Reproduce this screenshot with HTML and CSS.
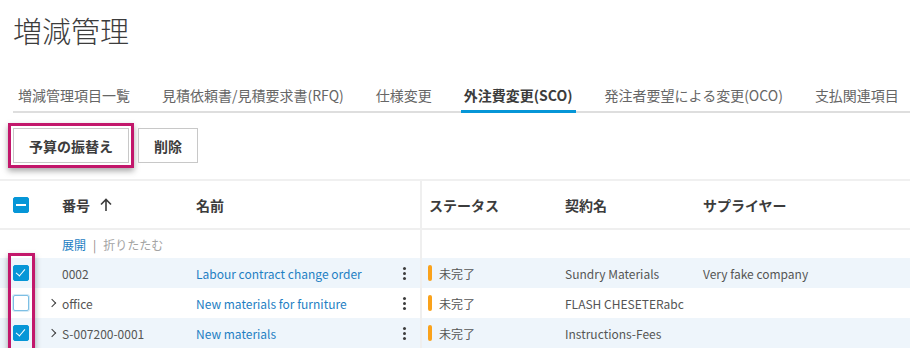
FILE: index.html
```html
<!DOCTYPE html>
<html lang="ja">
<head>
    <meta charset="UTF-8">
    <meta name="viewport" content="width=device-width, initial-scale=1.0">
    <title>増減管理</title>
    <link rel="stylesheet" href="styles.css">
</head>
<body>

    <div class="page-head">
        <h1 class="page-title">増減管理</h1>

        <nav class="tabs">
            <a class="tab">増減管理項目一覧</a>
            <a class="tab">見積依頼書/見積要求書(RFQ)</a>
            <a class="tab">仕様変更</a>
            <a class="tab active">外注費変更(SCO)</a>
            <a class="tab">発注者要望による変更(OCO)</a>
            <a class="tab">支払関連項目</a>
        </nav>

        <div class="toolbar">
            <span class="highlight">
                <button class="btn">予算の振替え</button>
            </span>
            <button class="btn">削除</button>
        </div>
    </div>

    <div class="grid-table">
        <!-- 注釈：チェックボックス列の強調枠 -->
        <div class="highlight-col"></div>

        <div class="row head">
            <div class="cell check"><span class="cb partial"></span></div>
            <div class="cell"></div>
            <div class="cell">番号
                <svg class="sort" width="12" height="14" viewBox="0 0 12 14"><path d="M6 13V1.5M1 6.5L6 1.5l5 5" fill="none" stroke="#3c3c3c" stroke-width="1.6"/></svg>
            </div>
            <div class="cell name">名前</div>
            <div class="cell status-col">ステータス</div>
            <div class="cell">契約名</div>
            <div class="cell">サプライヤー</div>
        </div>

        <div class="row expand">
            <div class="cell check"></div>
            <div class="cell"></div>
            <div class="cell"><a class="link">展開</a><span class="sep">|</span><span class="muted">折りたたむ</span></div>
            <div class="cell name"></div>
            <div class="cell status-col"></div>
            <div class="cell"></div>
            <div class="cell"></div>
        </div>

        <div class="row item alt">
            <div class="cell check"><span class="cb checked"></span></div>
            <div class="cell"></div>
            <div class="cell">0002</div>
            <div class="cell name"><a class="link">Labour contract change order</a><span class="kebab"></span></div>
            <div class="cell status-col"><span class="status">未完了</span></div>
            <div class="cell">Sundry Materials</div>
            <div class="cell">Very fake company</div>
        </div>

        <div class="row item">
            <div class="cell check"><span class="cb"></span></div>
            <div class="cell"><span class="chev"></span></div>
            <div class="cell">office</div>
            <div class="cell name"><a class="link">New materials for furniture</a><span class="kebab"></span></div>
            <div class="cell status-col"><span class="status">未完了</span></div>
            <div class="cell">FLASH CHESETERabc</div>
            <div class="cell"></div>
        </div>

        <div class="row item alt">
            <div class="cell check"><span class="cb checked"></span></div>
            <div class="cell"><span class="chev"></span></div>
            <div class="cell">S-007200-0001</div>
            <div class="cell name"><a class="link">New materials</a><span class="kebab"></span></div>
            <div class="cell status-col"><span class="status">未完了</span></div>
            <div class="cell">Instructions-Fees</div>
            <div class="cell"></div>
        </div>
    </div>

</body>
</html>
```

FILE: styles.css
```css
body {
    margin: 0;
    background: #fff;
    color: #3c3c3c;
    font-family: "Noto Sans CJK JP", "Noto Sans", sans-serif;
}

.page-head {
    padding: 10px 0 0 13px;
}

.page-title {
    margin: 0;
    font-size: 29px;
    line-height: 40px;
    font-weight: 300;
    color: #3c3c3c;
}

.tabs {
    display: flex;
    gap: 26px;
    margin-top: 35px;
    padding-left: 2px;
    border-bottom: 2px solid #dedede;
}
.tab {
    padding: 0 3px 5px;
    margin-bottom: -2px;
    border-bottom: 3px solid transparent;
    font-size: 14px;
    line-height: 20px;
    color: #666;
    white-space: nowrap;
}
.tab.active {
    font-weight: 700;
    color: #3c3c3c;
    border-bottom-color: #0696d7;
}

.toolbar {
    display: flex;
    align-items: center;
    gap: 4px;
    margin: 10px 0 0 -5px;
}
.highlight {
    display: inline-flex;
    padding: 2px;
    border: 3px solid #c2176b;
    box-shadow: 0 3px 6px rgba(0, 0, 0, 0.35);
}
.btn {
    height: 35px;
    padding: 0 15px;
    background: #fff;
    border: 1px solid #c8c8c8;
    border-radius: 0;
    font-family: inherit;
    font-size: 14px;
    font-weight: 700;
    color: #3c3c3c;
}

.grid-table {
    position: relative;
    margin-top: 11px;
    border-top: 2px solid #f0f0f0;
}

.highlight-col {
    position: absolute;
    left: 8px;
    top: 72px;
    width: 21px;
    height: 96px;
    border: 3px solid #c2176b;
    box-shadow: 0 3px 6px rgba(0, 0, 0, 0.35);
    z-index: 2;
}

.row {
    display: grid;
    grid-template-columns: 48px 14px 134px 226px 143px 138px 1fr;
    height: 30px;
    font-size: 12px;
    color: #555;
}
.row.alt { background: #eef5fb; }
.row.head {
    height: 47px;
    border-bottom: 2px solid #efefef;
    font-size: 14px;
    font-weight: 700;
    color: #3c3c3c;
}
.row.expand { height: 28px; font-size: 12px; }

.cell {
    display: flex;
    align-items: center;
    white-space: nowrap;
    min-width: 0;
}
.cell.check { padding-left: 13px; }
.cell.name {
    justify-content: space-between;
    padding-right: 14px;
    border-right: 2px solid #efefef;
}
.cell.status-col { padding-left: 6px; }
.row.head .cell.status-col { padding-left: 7px; }

.sort { margin-left: 10px; }

.link { color: #1e80c3; }
.sep { color: #888; margin: 0 7px; }
.muted { color: #a3a3a3; }

.cb {
    box-sizing: border-box;
    width: 16px;
    height: 16px;
    border-radius: 2px;
    background: #fff;
    border: 1px solid #7dbfe4;
    box-shadow: 0 0 0 1px #d3e9f6;
    position: relative;
}
.cb.checked, .cb.partial {
    background: #0696d7;
    border-color: #0696d7;
    box-shadow: none;
}
.cb.partial::after {
    content: "";
    position: absolute;
    left: 2px;
    right: 2px;
    top: 6px;
    height: 2px;
    background: #fff;
}
.cb.checked::after {
    content: "";
    position: absolute;
    left: 4px;
    top: 1px;
    width: 4px;
    height: 8px;
    border: solid #fff;
    border-width: 0 1.5px 1.5px 0;
    transform: rotate(40deg);
}

.chev {
    width: 5px;
    height: 5px;
    margin-left: 1px;
    border: solid #3c3c3c;
    border-width: 1.5px 1.5px 0 0;
    transform: rotate(45deg);
}

.kebab {
    width: 3px;
    height: 3px;
    border-radius: 50%;
    background: #3c3c3c;
    box-shadow: 0 -5px 0 #3c3c3c, 0 5px 0 #3c3c3c;
}

.status {
    display: flex;
    align-items: center;
    gap: 7px;
    color: #555;
}
.status::before {
    content: "";
    width: 4px;
    height: 16px;
    border-radius: 2px;
    background: #faa21b;
}
```
